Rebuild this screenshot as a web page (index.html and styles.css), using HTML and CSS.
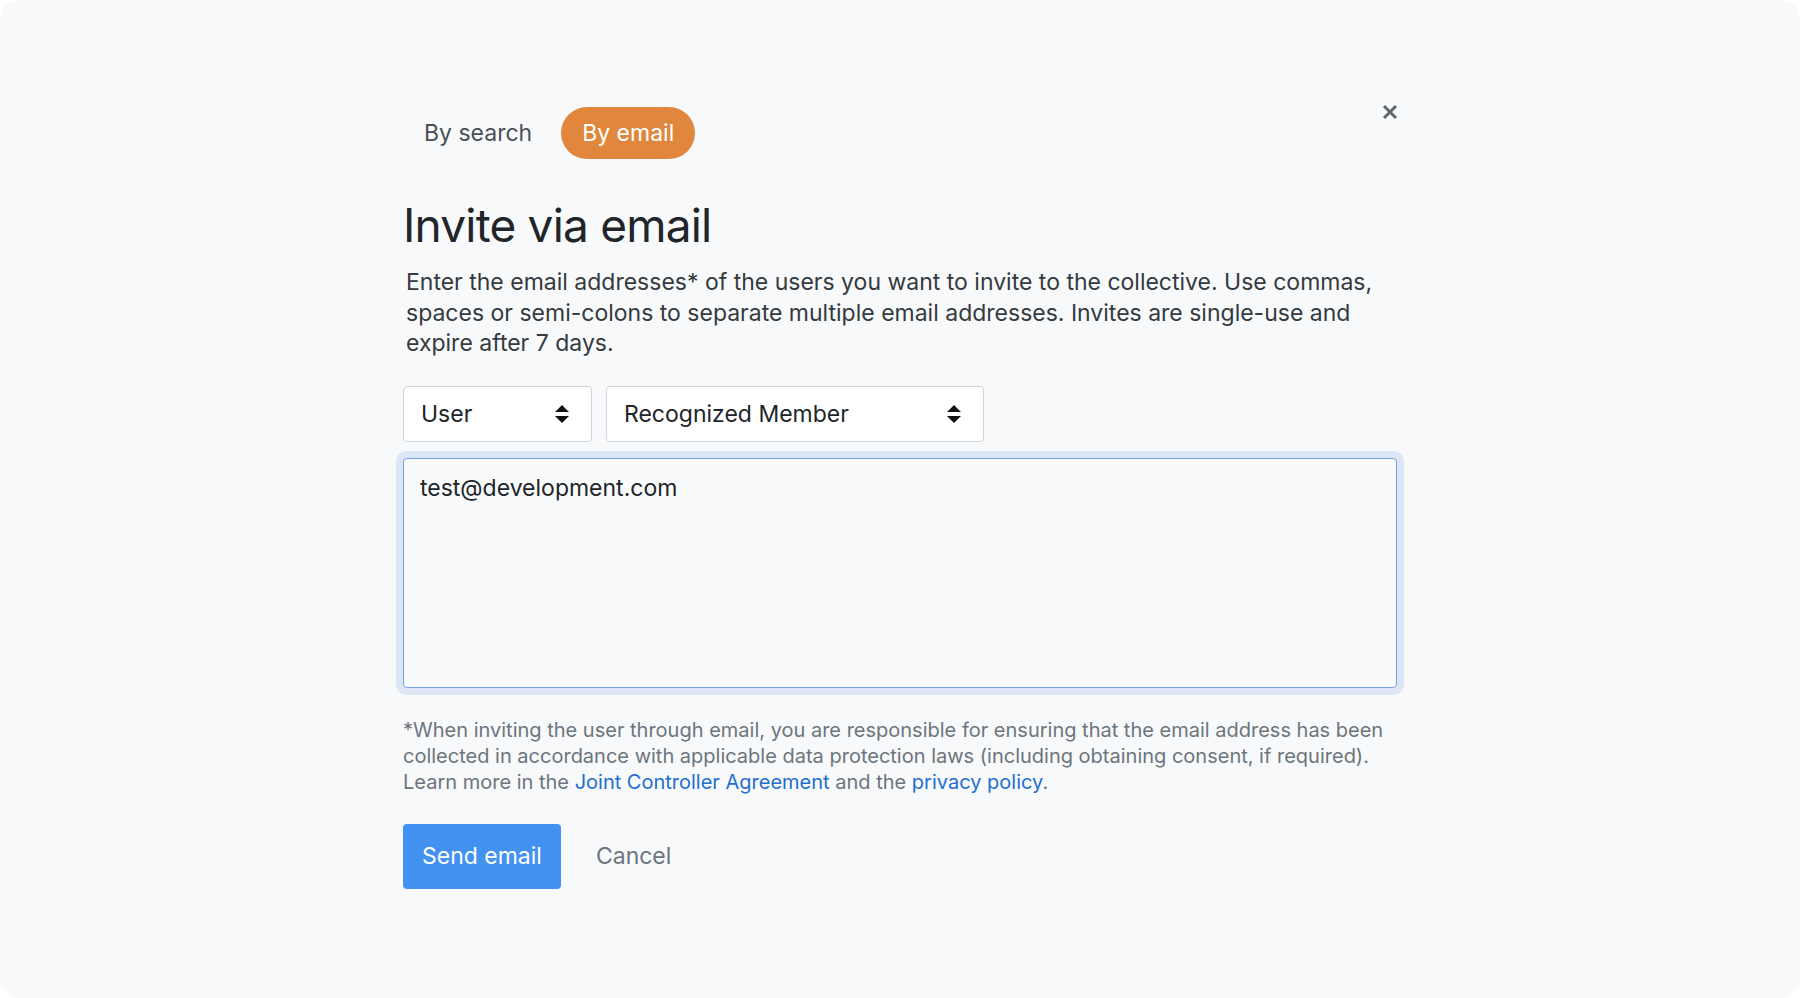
FILE: index.html
```html
<!DOCTYPE html>
<html>
	<head>
		<title>Invite via email</title>
		<link rel="stylesheet" href="styles.css">
	</head>
	<body>
		<div class="frame">
			<div class="dialog">
				<div class="dialog-head">
					<div class="tabs">
						<span class="tab">By search</span>
						<span class="tab active">By email</span>
					</div>
					<span class="close">
						<svg width="16" height="16" viewBox="0 0 16 16"><path d="M2 2 L14 14 M14 2 L2 14" stroke="#5f666d" stroke-width="3" stroke-linecap="butt"/></svg>
					</span>
				</div>
				<h1>Invite via email</h1>
				<p class="intro">Enter the email addresses* of the users you want to invite to the collective. Use commas, spaces or semi-colons to separate multiple email addresses. Invites are single-use and expire after 7 days.</p>
				<div class="selects">
					<div class="select small">
						User
						<svg class="arrows" width="14" height="18" viewBox="0 0 14 18"><path d="M7 0 L14 7 L0 7 Z M0 11 L14 11 L7 18 Z" fill="#111"/></svg>
					</div>
					<div class="select wide">
						Recognized Member
						<svg class="arrows" width="14" height="18" viewBox="0 0 14 18"><path d="M7 0 L14 7 L0 7 Z M0 11 L14 11 L7 18 Z" fill="#111"/></svg>
					</div>
				</div>
				<div class="textarea">test@development.com</div>
				<p class="note">*When inviting the user through email, you are responsible for ensuring that the email address has been collected in accordance with applicable data protection laws (including obtaining consent, if required). Learn more in the <a href="#">Joint Controller Agreement</a> and the <a href="#">privacy policy</a>.</p>
				<div class="actions">
					<span class="btn-primary">Send email</span>
					<span class="btn-link">Cancel</span>
				</div>
			</div>
		</div>
	</body>
</html>
```

FILE: styles.css
```css
body {
	margin: 0;
	background: #ffffff;
	font-family: Inter, "Noto Sans", sans-serif;
	color: #212529;
}

.frame {
	height: 998px;
	border-radius: 20px;
	background: #f8f9fa;
	box-sizing: border-box;
	padding-top: 107px;
	overflow: hidden;
}

.dialog {
	width: 994px;
	margin: 0 auto;
}

.dialog-head {
	display: flex;
	justify-content: space-between;
	align-items: flex-start;
}

.tabs {
	display: flex;
	gap: 8px;
}

.tab {
	height: 52px;
	line-height: 52px;
	padding: 0 21px;
	border-radius: 26px;
	font-size: 23px;
	color: #495057;
}

.tab.active {
	background: #e0873d;
	color: #ffffff;
}

.close {
	margin-top: -3px;
	margin-right: -1px;
	width: 16px;
	height: 16px;
}

h1 {
	margin: 37px 0 0 0;
	font-size: 46px;
	font-weight: 400;
	letter-spacing: -0.8px;
	line-height: 58px;
	color: #212529;
}

.intro {
	margin: 13px 0 0 3px;
	font-size: 23px;
	line-height: 30.5px;
	color: #343a40;
}

.selects {
	display: flex;
	gap: 14px;
	margin-top: 27px;
}

.select {
	height: 56px;
	box-sizing: border-box;
	border: 1px solid #ced4da;
	border-radius: 4px;
	background: #ffffff;
	padding: 0 22px 0 17px;
	display: flex;
	align-items: center;
	justify-content: space-between;
	font-size: 23px;
	color: #212529;
}

.select.small {
	width: 189px;
}

.select.wide {
	width: 378px;
}

.textarea {
	margin-top: 16px;
	height: 230px;
	box-sizing: border-box;
	border: 1px solid #76a2e2;
	border-radius: 4px;
	box-shadow: 0 0 0 7px #dce6f4;
	background: #f9fafb;
	padding: 13px 16px;
	font-size: 23px;
	line-height: 32px;
	color: #212529;
}

.note {
	margin: 29px 0 0 0;
	font-size: 20px;
	line-height: 26px;
	color: #6c757d;
}

.note a {
	color: #1f6fd1;
	text-decoration: none;
}

.actions {
	display: flex;
	align-items: center;
	gap: 35px;
	margin-top: 29px;
}

.btn-primary {
	height: 65px;
	line-height: 65px;
	padding: 0 19px;
	border-radius: 4px;
	background: #4391f1;
	color: #ffffff;
	font-size: 23px;
}

.btn-link {
	font-size: 23px;
	color: #6c757d;
}
```
